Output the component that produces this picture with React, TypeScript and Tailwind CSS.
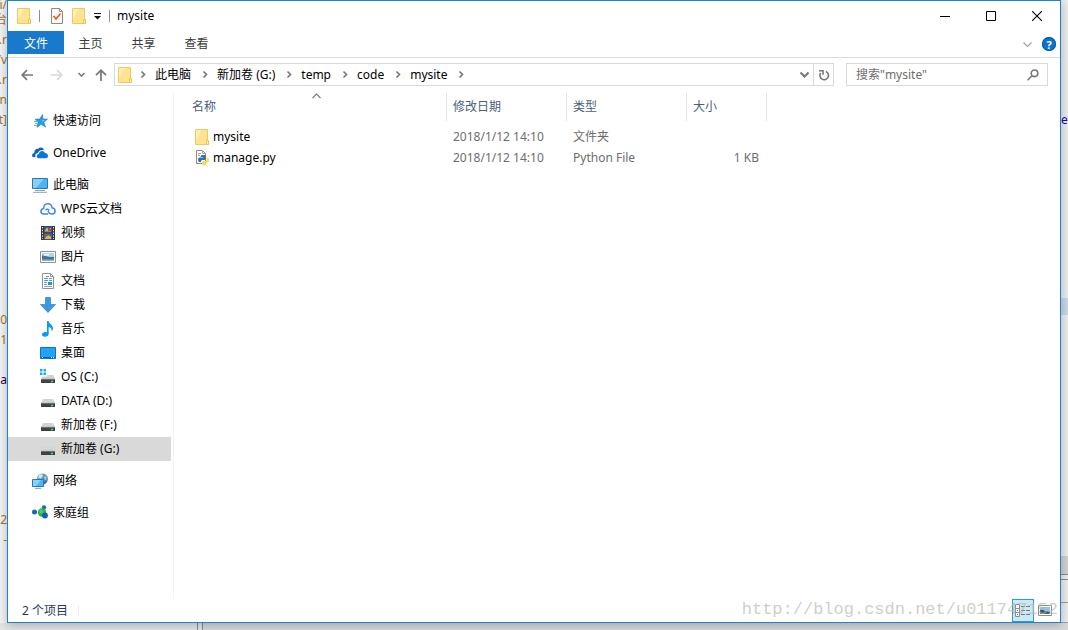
import React from 'react';

type IconProps = { className?: string };

const FolderIcon = ({ className = '' }: IconProps) => (
  <svg viewBox="0 0 16 16" className={`w-4 h-4 shrink-0 ${className}`} aria-hidden="true">
    <path d="M1.500.5h12v11h1v4h-13z" fill="#ffe391" stroke="#ecca5e" />
    <path d="M2 1h6L2 11z" fill="#ffedb3" />
    <path d="M12.500 15.500v-4h2v4z" fill="#fff0b8" stroke="#e8c452" />
  </svg>
);

const CheckedPageIcon = () => (
  <svg viewBox="0 0 16 16" className="w-4 h-4" aria-hidden="true">
    <path d="M2.500.5h8l3 3v12h-11z" fill="#fafafa" stroke="#8a8a8a" />
    <path d="M10.500 .5v3h3" fill="none" stroke="#8a8a8a" />
    <path d="M4.500 8l2.500 3 4.500-5.500" fill="none" stroke="#f05a1a" strokeWidth="1.700" />
  </svg>
);

const Chevron = ({ className = '', d = 'M2.500 1.500 5.500 4.500 2.500 7.500', weight = 1.6 }: IconProps & { d?: string; weight?: number }) => (
  <svg viewBox="0 0 9 9" className={`w-[9px] h-[9px] shrink-0 ${className}`} fill="none" stroke="currentColor" strokeWidth={weight} aria-hidden="true">
    <path d={d} />
  </svg>
);

const StarIcon = () => (
  <svg viewBox="0 0 16 16" className="w-4 h-4" aria-hidden="true">
    <path d="M10.500 1.500 11 6l4.500.2-3.700 2.800 1.700 5-4.500-2.700-4 3 1.200-5L3 6.300l4.700-.2z" fill="#2b9be8" stroke="#1478bd" strokeWidth=".6" />
    <path d="M2 8.500h4M3 10.500h3M2 12.500h3" stroke="#52b5ee" />
    <path d="M10 4l.4 3 2.500.3-2.600 1.400z" fill="#7cd0fa" />
  </svg>
);

const OneDriveIcon = () => (
  <svg viewBox="0 0 16 16" className="w-4 h-4" aria-hidden="true">
    <path d="M.2 11.200A2.600 2.600 0 0 1 2.200 8C2.300 5 4 3.500 6.200 3.700c1.500-1.800 5-1.500 5.800 1.400C8.700 4.600 6.500 6 6 8c-2.200.2-3 1.700-2.500 3.700C2 12.500.8 12.300.2 11.200z" fill="#0a63c4" />
    <path d="M6.600 13.200C4.200 13 4 9.500 6.800 9c.5-3.500 5.200-4 6.200-.9 3.500-.1 3.900 4.600 1.300 5.100z" fill="#0a76dc" />
  </svg>
);

const PcIcon = () => (
  <svg viewBox="0 0 16 16" className="w-4 h-4" aria-hidden="true">
    <path d="M.5 1.500h15v10H.5z" fill="#48b5f5" stroke="#39749f" />
    <path d="M1 2h11L4 11H1z" fill="#82d1fb" />
    <path d="M3 13.500h10M1 15.300h14" stroke="#8da2b3" />
  </svg>
);

const WpsCloudIcon = () => (
  <svg viewBox="0 0 16 16" className="w-4 h-4" fill="none" stroke="#4187ee" strokeWidth="1.500" aria-hidden="true">
    <path d="M8 13H4C0 13 0 8 3.700 7.500 3.500 1.500 11.500 1.200 12 6.800c4.200.7 4 6.200 0 6.200-2.200 0-4-1.200-3.700-3.400M5.500 9c1.200-1.200 3-1 3.600.4" />
  </svg>
);

const VideoIcon = () => (
  <svg viewBox="0 0 16 16" className="w-4 h-4" aria-hidden="true">
    <path d="M1 1h14v14H1z" fill="#363636" />
    <path d="M4 1.500h8v6H4z" fill="#355aa5" />
    <path d="M4 8.500h8v6H4z" fill="#3c68b7" />
    <path d="M5 5.500l2-3 2 2 2-2v4H5zM5 13l3-3 3 2v2H5z" fill="#e8b72c" />
    <path d="M8 4h3v2H8zM5 9h3v2H5z" fill="#c04c34" />
    <path d="M2.500 2v12M13.500 2v12" stroke="#e8e8e8" strokeDasharray="1.400 1.400" />
  </svg>
);

const PictureIcon = () => (
  <svg viewBox="0 0 16 16" className="w-4 h-4" aria-hidden="true">
    <path d="M.5 2.500h15v11H.5z" fill="#fff" stroke="#919191" />
    <path d="M2 4h12v8H2z" fill="#a7d7f8" />
    <path d="M2 6.500c3-.3 5 2 12 1.500v4H2z" fill="#45758a" />
    <path d="M2 10.500h12V12H2z" fill="#8cb6cf" />
    <path d="M4 5h5v1.500H4z" fill="#eff9ff" />
  </svg>
);

const DocumentIcon = () => (
  <svg viewBox="0 0 16 16" className="w-4 h-4" aria-hidden="true">
    <path d="M2.500.5h8l3 3v12h-11z" fill="#fff" stroke="#919191" />
    <path d="M10.500.5v3h3" fill="none" stroke="#919191" />
    <path d="M6 3.500h3M4 5.500h4m1 0h3M4 7.500h4m1 0h3M4 9.500h3m-3 2h3" stroke="#3da4d8" />
    <path d="M8 9h4v3H8z" fill="#3a8bc4" />
    <path d="M4 13.500h8" stroke="#9c9c9c" />
  </svg>
);

const DownloadIcon = () => (
  <svg viewBox="0 0 16 16" className="w-4 h-4" aria-hidden="true">
    <path d="M5.500 .5h5v7h5L8 15.500.5 7.500h5z" fill="#3a97e4" stroke="#2b7fca" strokeWidth=".7" />
  </svg>
);

const MusicIcon = () => (
  <svg viewBox="0 0 16 16" className="w-4 h-4" aria-hidden="true">
    <path d="M7 0h1.600c.3 3 4.400 3.600 4.400 7.200 0 1.300-.6 2.400-1.400 3.200.4-2.900-1-4-2.900-4.400V13c0 1.700-1.700 2.800-3.700 2.800S2 14.800 2 13.500 3.600 11 5.400 11c.6 0 1.200.1 1.600.3z" fill="#0b9af2" />
  </svg>
);

const DesktopIcon = () => (
  <svg viewBox="0 0 16 16" className="w-4 h-4" aria-hidden="true">
    <path d="M.5 2.500h15v11H.5z" fill="#1fa3fb" stroke="#0e74c2" />
    <path d="M1 12.500h14" stroke="#0a63ae" />
    <path d="M2 12.500h1m8 0h1m1 0h1" stroke="#fff" />
  </svg>
);

const DriveIcon = ({ system }: { system?: boolean }) => (
  <svg viewBox="0 0 16 16" className="w-4 h-4" aria-hidden="true">
    {system && <path d="M0 0h2.500v2.500H0zM3.500 0H6v2.500H3.500zM0 3.500h2.500V6H0zM3.500 3.500H6V6H3.500z" fill="#15aef0" />}
    {system ? <path d="M7 6h6.500L15 10H1.500L2 7.500h5z" fill="#cfd1d3" /> : <path d="M3 6h10l2 4H1z" fill="#d2d4d6" />}
    <path d="M1 10h14v4H1z" fill="#3f4244" />
    <path d="M1 10.300h14" stroke="#85898b" strokeWidth=".8" />
    <path d="M11 12.500h2" stroke="#3df06a" strokeWidth="1.300" />
  </svg>
);

const NetworkIcon = () => (
  <svg viewBox="0 0 16 16" className="w-4 h-4" aria-hidden="true">
    <circle cx="10.500" cy="6" r="5.500" fill="#5f97b5" />
    <path d="M7 2c2-1.500 4-1 4 1L9 5.500 6 5z" fill="#c9e7ef" />
    <path d="M12 4l2-1 .5 3-1.500 1z" fill="#a5cfdf" />
    <path d="M12 9l3-2-1 3-2 1z" fill="#2c6688" />
    <path d="M.5 6.500h11v7H.5z" fill="#4bb8f8" stroke="#3277a9" />
    <path d="M1 7h8l-5 6H1z" fill="#83d3fd" />
    <path d="M3 15.300h6" stroke="#7998ad" />
  </svg>
);

const HomegroupIcon = () => (
  <svg viewBox="0 0 16 16" className="w-4 h-4" aria-hidden="true">
    <circle cx="2.500" cy="7" r="2.500" fill="#1867bb" />
    <circle cx="12" cy="2.500" r="2.200" fill="#1770b6" />
    <circle cx="10" cy="7.500" r="4.200" fill="#2dae49" />
    <circle cx="9.200" cy="6.500" r="2" fill="#55cd63" />
    <circle cx="13" cy="10.500" r="2.900" fill="#155bb0" />
  </svg>
);

const PythonFileIcon = () => (
  <svg viewBox="0 0 16 16" className="w-4 h-4 shrink-0" aria-hidden="true">
    <path d="M2.500.5h6l3 3v10h-9z" fill="#fff" stroke="#8a8a8a" />
    <path d="M8.500.5v3h3M4 3.500h3M4 5.500h2" fill="none" stroke="#a5a5a5" />
    <path d="M8 5h2.500Q12 5 12 6.500v2Q12 10 10.500 10H8.200q-1.200 0-1.200 2H5.500Q4 12 4 9.800T5.500 7.500H9V7H6.500q0-2 1.500-2z" fill="#3572a8" />
    <path d="M12.800 7.500H13.500q1.500 0 1.500 2.500t-1.500 2.500H10v.5h2.500q0 2.500-2.200 2.500T8 14v-1.800Q8 11 9.500 11h1.800q1.500 0 1.500-1.500z" fill="#fdd94e" />
  </svg>
);

const TABS = ['主页', '共享', '查看'];
const CRUMBS = ['此电脑', '新加卷 (G:)', 'temp', 'code', 'mysite'];

const NAV_GROUPS = [
  { label: '快速访问', icon: <StarIcon />, children: [] },
  { label: 'OneDrive', icon: <OneDriveIcon />, children: [] },
  {
    label: '此电脑',
    icon: <PcIcon />,
    children: [
      { label: 'WPS云文档', icon: <WpsCloudIcon /> },
      { label: '视频', icon: <VideoIcon /> },
      { label: '图片', icon: <PictureIcon /> },
      { label: '文档', icon: <DocumentIcon /> },
      { label: '下载', icon: <DownloadIcon /> },
      { label: '音乐', icon: <MusicIcon /> },
      { label: '桌面', icon: <DesktopIcon /> },
      { label: 'OS (C:)', icon: <DriveIcon system /> },
      { label: 'DATA (D:)', icon: <DriveIcon /> },
      { label: '新加卷 (F:)', icon: <DriveIcon /> },
      { label: '新加卷 (G:)', icon: <DriveIcon />, active: true },
    ],
  },
  { label: '网络', icon: <NetworkIcon />, children: [] },
  { label: '家庭组', icon: <HomegroupIcon />, children: [] },
];

const FILES = [
  { name: 'mysite', icon: <FolderIcon />, date: '2018/1/12 14:10', type: '文件夹', size: '' },
  { name: 'manage.py', icon: <PythonFileIcon />, date: '2018/1/12 14:10', type: 'Python File', size: '1 KB' },
];

// lines of the editor that stick out on the left of the window
const EDITOR_LINES = ['i/', '台', '.r', '/v', '.r', '.n', 't]', '', '', '', '', '', '', '', '', '', '60', '1', '', 'ja', '', '', '', '', '', '', '2', '-'];

const TitleBar = () => (
  <header className="flex h-[30px] items-center pl-2">
    <FolderIcon />
    <span className="ml-[7px] h-3 w-px bg-[#8f8f8f]" />
    <button aria-label="属性" className="ml-[9px]"><CheckedPageIcon /></button>
    <button aria-label="新建文件夹" className="ml-1.5"><FolderIcon /></button>
    <button aria-label="自定义快速访问工具栏" className="ml-1.5">
      <svg viewBox="0 0 9 9" className="w-[9px] h-[9px]" aria-hidden="true">
        <path d="M1 1.500h7" stroke="#111" />
        <path d="M1 4h7L4.500 7.500z" fill="#111" />
      </svg>
    </button>
    <span className="ml-[7px] h-3 w-px bg-[#8f8f8f]" />
    <h1 className="ml-[7px] flex-1">mysite</h1>
    <button aria-label="最小化" className="flex h-full w-[46px] items-center justify-center">
      <svg viewBox="0 0 10 10" className="w-2.5 h-2.5" stroke="#000"><path d="M0 5.500h10" /></svg>
    </button>
    <button aria-label="最大化" className="flex h-full w-[46px] items-center justify-center">
      <svg viewBox="0 0 10 10" className="w-2.5 h-2.5" fill="none" stroke="#000"><path d="M.5.5h9v9h-9z" /></svg>
    </button>
    <button aria-label="关闭" className="flex h-full w-[46px] items-center justify-center">
      <svg viewBox="0 0 10 10" className="w-2.5 h-2.5" stroke="#000" strokeWidth="1.100"><path d="M0 0l10 10M10 0L0 10" /></svg>
    </button>
  </header>
);

const Ribbon = () => (
  <div className="flex h-[27px] items-start border-b border-[#dadbdc] pr-1">
    <button className="h-[23px] w-14 bg-[#1979ca] pt-0.5 text-white">文件</button>
    {TABS.map((tab) => (
      <button key={tab} className="h-[23px] w-[53px] pt-0.5 text-[#3b3b3b]">{tab}</button>
    ))}
    <div className="ml-auto flex h-[26px] items-center gap-2.5">
      <button aria-label="展开功能区" className="text-[#a0a0a0]">
        <Chevron d="M.5 2.500 4.500 6.500 8.500 2.500" weight={1.2} />
      </button>
      <button aria-label="帮助" className="flex h-3.5 w-3.5 items-center justify-center rounded-full bg-[#0a74d0] text-[11px] font-bold leading-none text-white ring-1 ring-inset ring-[#0b5aa5]">
        ?
      </button>
    </div>
  </div>
);

const AddressBar = () => (
  <div className="flex h-[35px] items-start gap-3 pr-3 pl-1.5 pt-[5px]">
    <div className="flex min-w-0 flex-1 items-center gap-1">
      <button aria-label="后退" className="flex w-[26px] justify-center text-[#777]">
        <svg viewBox="0 0 12 12" className="w-3 h-3" fill="none" stroke="currentColor" strokeWidth="1.700"><path d="M12 6H1.200M6 1.200 1.200 6 6 10.800" /></svg>
      </button>
      <button aria-label="前进" className="flex w-[26px] justify-center text-[#d8d8d8]">
        <svg viewBox="0 0 12 12" className="w-3 h-3" fill="none" stroke="currentColor" strokeWidth="1.700"><path d="M0 6h10.800M6 1.200 10.800 6 6 10.800" /></svg>
      </button>
      <button aria-label="最近浏览的位置" className="flex w-3.5 justify-center text-[#7a7a7a]">
        <Chevron d="M1.500 3 4.500 6 7.500 3" />
      </button>
      <button aria-label="上移" className="flex w-[18px] justify-center text-[#777]">
        <svg viewBox="0 0 12 12" className="w-3 h-3" fill="none" stroke="currentColor" strokeWidth="1.700"><path d="M6 12V1.200M1 6.200l5-5 5 5" /></svg>
      </button>
      <div className="flex h-[23px] min-w-0 flex-1 items-center border border-[#d9d9d9] pl-0.5">
        <FolderIcon />
        <nav aria-label="地址" className="ml-1.5 flex flex-1 items-center gap-[7px] whitespace-nowrap">
          {CRUMBS.map((crumb) => (
            <React.Fragment key={crumb}>
              <Chevron className="text-[#757575]" />
              <a href="#" className="pr-[3px]">{crumb}</a>
            </React.Fragment>
          ))}
          <Chevron className="text-[#757575]" />
        </nav>
        <button aria-label="以前的位置" className="flex w-[18px] justify-center text-[#777]">
          <Chevron d="M.5 2.500 4.500 6.500 8.500 2.500" weight={2} />
        </button>
        <button aria-label="刷新" className="flex h-full w-5 items-center justify-center border-l border-[#d9d9d9] text-[#777]">
          <svg viewBox="0 0 12 12" className="w-3 h-3" fill="none" stroke="currentColor" strokeWidth="1.600">
            <path d="M7.800 2.400A4.300 4.300 0 1 1 2.600 4" />
            <path d="M1 1.800h4v4" />
          </svg>
        </button>
      </div>
    </div>
    <label className="flex h-[23px] w-[202px] items-center border border-[#d9d9d9] pr-2 pl-[9px]">
      <input type="text" aria-label="搜索" placeholder={'搜索"mysite"'} className="min-w-0 flex-1 outline-none placeholder:text-[#6d6d6d]" />
      <svg viewBox="0 0 12 12" className="w-3 h-3" fill="none" stroke="#777" strokeWidth="1.600" aria-hidden="true">
        <circle cx="7.500" cy="4.300" r="3.300" />
        <path d="M5 6.800.6 11.200" />
      </svg>
    </label>
  </div>
);

const NavPane = () => (
  <nav className="w-[166px] shrink-0 border-r border-[#f3f3f3] pt-4 pr-0.5">
    <ul className="flex flex-col gap-2">
      {NAV_GROUPS.map((group) => (
        <li key={group.label}>
          <a href="#" className="flex h-6 items-center gap-[5px] pl-6">{group.icon}{group.label}</a>
          {group.children.length > 0 && (
            <ul>
              {group.children.map((item) => (
                <li key={item.label}>
                  <a href="#" className={`flex h-6 items-center gap-[5px] pl-8 ${'active' in item ? 'bg-[#d9d9d9]' : ''}`}>
                    {item.icon}{item.label}
                  </a>
                </li>
              ))}
            </ul>
          )}
        </li>
      ))}
    </ul>
  </nav>
);

const FileList = () => (
  <main className="min-w-0 flex-1 pl-3">
    <table className="table-fixed border-separate border-spacing-0 text-left text-[#6d6d6d]">
      <colgroup>
        <col className="w-[261px]" />
        <col className="w-[120px]" />
        <col className="w-[120px]" />
        <col className="w-[80px]" />
      </colgroup>
      <thead>
        <tr className="h-7 text-[#4c607a]">
          {['名称', '修改日期', '类型', '大小'].map((label, i) => (
            <th key={label} className="relative border-r border-[#e5e5e5] px-1.5 font-normal">
              {label}
              {i === 0 && (
                <Chevron className="absolute inset-x-0 top-0 mx-auto text-[#777]" d="M.5 5 4.500 1 8.500 5" weight={1.1} />
              )}
            </th>
          ))}
        </tr>
      </thead>
      <tbody className="before:block before:h-[5px]">
        {FILES.map((file) => (
          <tr key={file.name} className="h-[21px]">
            <td className="pl-2 text-black">
              <span className="flex items-center gap-[3px]">{file.icon}{file.name}</span>
            </td>
            <td className="px-1.5">{file.date}</td>
            <td className="px-1.5">{file.type}</td>
            <td className="px-2 text-right">{file.size}</td>
          </tr>
        ))}
      </tbody>
    </table>
  </main>
);

const StatusBar = () => (
  <footer className="relative flex h-[23px] items-center pr-1 pl-3.5 text-[#26395c]">
    <span>2 个项目</span>
    <span className="ml-2.5 h-3 w-px bg-[#ededed]" />
    <button aria-label="详细信息" className="ml-auto flex h-[23px] w-[22px] items-center justify-center border border-[#26a0da] bg-[#cbe8f6]">
      <svg viewBox="0 0 16 14" className="h-3.5 w-4" fill="none" aria-hidden="true">
        <path d="M.5.5h4v12h-4zM.5 4.500h4m-4 4h4" fill="#fff" stroke="#8c8c8c" />
        <path d="M6 2.500h4m1 0h4M6 6.500h4m1 0h4M6 10.500h4m1 0h4" stroke="#777" />
        <path d="M2 6.500h1" stroke="#3a8ee8" />
        <path d="M2 10.500h1" stroke="#e04040" />
      </svg>
    </button>
    <button aria-label="大缩略图" className="flex h-[23px] w-[22px] items-center justify-center">
      <svg viewBox="0 0 14 11" className="h-[11px] w-3.5" aria-hidden="true">
        <path d="M.5.5h13v10H.5z" fill="#fff" stroke="#8c8c8c" />
        <path d="M2 2h10v7H2z" fill="#8fc3f8" />
        <path d="M2 5q3-1 5 1l5 1v2H2z" fill="#375f72" />
      </svg>
    </button>
    <span className="pointer-events-none absolute right-0.5 bottom-0 font-['Liberation_Mono','Liberation_Serif',monospace] text-[17px] leading-6 text-[#b9b9ae]/70">
      http://blog.csdn.net/u011747152
    </span>
  </footer>
);

export default function App() {
  return (
    <div className="flex min-h-screen flex-col overflow-hidden bg-[#e6e6e6] font-['Noto_Sans','Noto_Sans_CJK_SC',sans-serif] text-xs text-black">
      <div className="flex flex-1">
        <div className="flex w-[7px] shrink-0 flex-col items-end overflow-hidden bg-[#f2f2f2] text-[#9a7434]">
          {EDITOR_LINES.map((line, i) => (
            <span key={i} className={`shrink-0 ${i === 0 ? 'h-2.5 leading-[10px]' : 'h-5 leading-5'} ${line === 'ja' ? 'text-[#1c0050]' : ''}`}>{line}</span>
          ))}
        </div>
        <div className="z-10 flex min-w-0 flex-1 flex-col border border-[#1883d7] bg-white shadow-[0_2px_9px_rgba(0,0,0,0.25)]">
          <TitleBar />
          <Ribbon />
          <AddressBar />
          <div className="flex flex-1">
            <NavPane />
            <FileList />
          </div>
          <StatusBar />
        </div>
        <div className="flex w-[7px] shrink-0 flex-col overflow-hidden bg-[#ebebeb]">
          <span className="pt-[110px] leading-5 text-[#1a00b8]">e</span>
          <div className="mt-[168px] h-[17px] bg-[#ccd6e6]" />
          <div className="mt-auto h-[18px] bg-[#d0d0d0]" />
          <div className="h-1.5 border-y border-[#8a8a8a]" />
          <div className="h-[23px] border-b border-[#9c9c9c]" />
          <div className="h-5 border-b border-[#9c9c9c]" />
        </div>
      </div>
      <div className="flex h-[7px] bg-[#e4e4e4]">
        <div className="ml-[197px] w-1.5 border-x border-[#8a8a8a]" />
        <div className="flex-1 bg-[#d8d8d8]" />
      </div>
    </div>
  );
}
